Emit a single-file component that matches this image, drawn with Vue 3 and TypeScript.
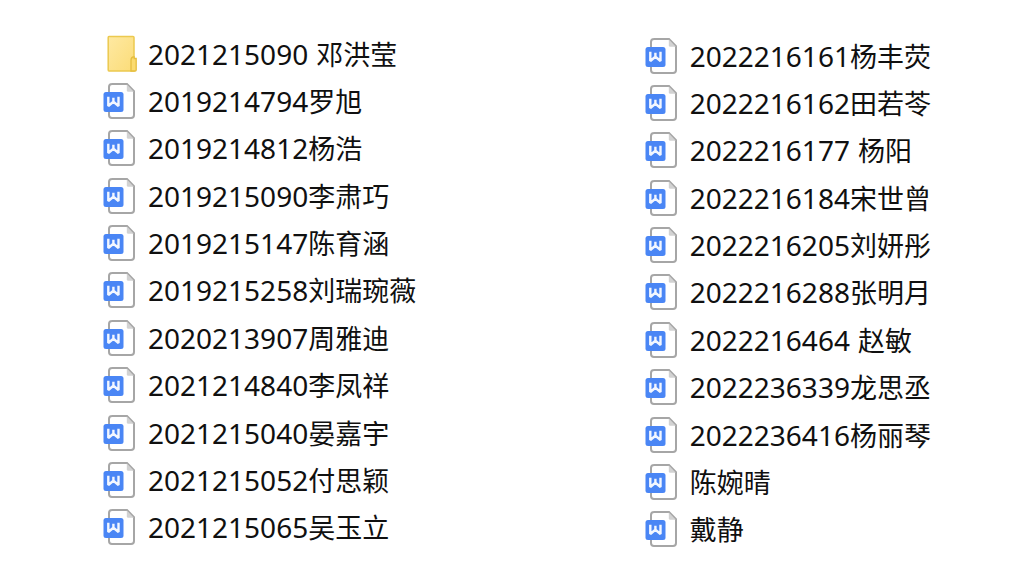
<script setup lang="ts">
interface FileEntry {
  kind: 'folder' | 'document'
  id?: string
  name: string
  spaced?: boolean
}

const doc = (id: string, name: string, spaced = false): FileEntry => ({ kind: 'document', id, name, spaced })

const columns: FileEntry[][] = [
  [
    { kind: 'folder', id: '2021215090', name: '邓洪莹', spaced: true },
    doc('2019214794', '罗旭'),
    doc('2019214812', '杨浩'),
    doc('2019215090', '李肃巧'),
    doc('2019215147', '陈育涵'),
    doc('2019215258', '刘瑞琬薇'),
    doc('2020213907', '周雅迪'),
    doc('2021214840', '李凤祥'),
    doc('2021215040', '晏嘉宇'),
    doc('2021215052', '付思颖'),
    doc('2021215065', '吴玉立'),
  ],
  [
    doc('2022216161', '杨丰荧'),
    doc('2022216162', '田若苓'),
    doc('2022216177', '杨阳', true),
    doc('2022216184', '宋世曾'),
    doc('2022216205', '刘妍彤'),
    doc('2022216288', '张明月'),
    doc('2022216464', '赵敏', true),
    doc('2022236339', '龙思丞'),
    doc('2022236416', '杨丽琴'),
    doc('', '陈婉晴'),
    doc('', '戴静'),
  ],
]
</script>

<template>
  <main class="files">
    <ul v-for="(entries, c) in columns" :key="c" class="column">
      <li v-for="entry in entries" :key="entry.name" class="row">
        <svg v-if="entry.kind === 'folder'" class="icon" viewBox="0 0 34 38" aria-hidden="true">
          <defs>
            <linearGradient id="folder-fill" x1="0" y1="0" x2="1" y2="1">
              <stop offset="0" stop-color="#fee9a2" />
              <stop offset="1" stop-color="#fbdc78" />
            </linearGradient>
          </defs>
          <path d="M6 1.500h24q1 0 1 1V36H6q-.8 0-.8-1V2.500q0-1 .8-1z" fill="url(#folder-fill)" stroke="#ecc94f" stroke-width="1.500" />
          <path d="M28 36V25.500q0-3 2-3.500h1.200v1.500h2V35q0 1-1 1z" fill="#fbdb70" stroke="#e5be3f" stroke-width="1.300" />
        </svg>
        <svg v-else class="icon" viewBox="0 0 34 38" aria-hidden="true">
          <path d="M8.500 1.900H24L31 9.200V33q0 3-3 3H9q-3 0-3-3V4.900q0-3 3-3z" fill="#fff" stroke="#a6a6a6" stroke-width="2" />
          <path d="M23.800 2.500L30.800 9.800H25.300q-1.500 0-1.500-1.500z" fill="#d2d2d2" />
          <rect x="0.500" y="10" width="20" height="20" rx="2.500" fill="#4a86f5" />
          <path d="M5.300 14.800V24L10.400 19.800L15.500 24V14.800M10.400 15.800V20" fill="none" stroke="#f3f7ff" stroke-width="2.400" stroke-linejoin="bevel" />
        </svg>
        <span class="label" :class="{ spaced: entry.spaced }">
          <span v-if="entry.id" class="number">{{ entry.id }}</span><span class="name">{{ entry.name }}</span>
        </span>
      </li>
    </ul>
  </main>
</template>

<style>
body {
  margin: 0;
  background: #fff;
}
</style>

<style scoped>
.files {
  box-sizing: border-box;
  min-height: 100vh;
  padding: 30px 0 30px 103px;
  display: grid;
  grid-template-columns: 10fr 7fr;
  color: #101010;
  font-family: "Noto Sans", "Noto Sans CJK SC", sans-serif;
}

.column {
  list-style: none;
  margin: 0;
  padding: 0;
  display: grid;
  grid-auto-rows: 1fr;
}

.column + .column {
  padding-top: 2px;
  margin-bottom: -2px;
}

.row {
  display: flex;
  align-items: center;
  gap: 11px;
}

.icon {
  flex: none;
  width: 34px;
  height: 38px;
}

.label {
  display: flex;
  align-items: baseline;
  line-height: 40px;
  white-space: nowrap;
}

.spaced {
  gap: 8px;
}

.number {
  font-size: 28px;
}

.name {
  font-size: 27px;
  font-family: "Noto Sans CJK SC", sans-serif;
}
</style>
